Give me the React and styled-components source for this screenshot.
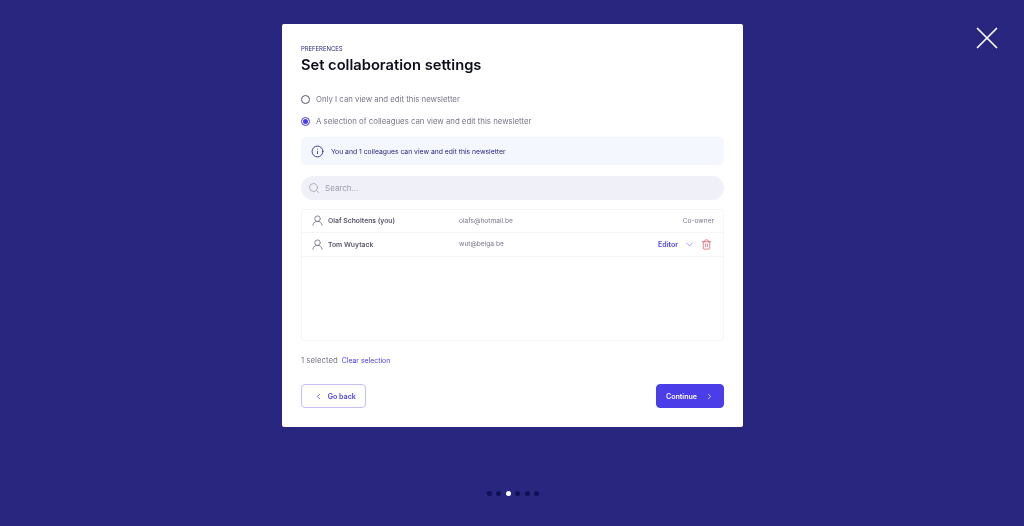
import React from "react";
import styled, { createGlobalStyle } from "styled-components";
import { Search, Info, ChevronDown, ChevronLeft, ChevronRight, Trash2, X } from "lucide-react";

const Global = createGlobalStyle`
  html, body { margin: 0; padding: 0; background: #29267f; }
  body { font-family: Inter, "Open Sans", sans-serif; overflow: hidden; }
  * { box-sizing: border-box; }
`;

const Page = styled.div`
  position: relative;
  width: 1024px;
  height: 526px;
  padding-top: 24px;
  display: flex;
  flex-direction: column;
  align-items: center;
`;

const Close = styled.button`
  position: absolute;
  top: 19px;
  right: 18px;
  padding: 0;
  border: 0;
  background: none;
  color: #fff;
  display: flex;
`;

const Modal = styled.div`
  width: 461px;
  height: 403px;
  margin-left: 1px;
  padding: 21px 19px 19px;
  background: #fff;
  border-radius: 2px;
  display: flex;
  flex-direction: column;
  will-change: transform;
`;

const Eyebrow = styled.div`
  font-size: 5.9px;
  line-height: 8px;
  color: #29267f;
  text-transform: uppercase;
`;

const Title = styled.h1`
  margin: 3px 0 0;
  font-size: 14.7px;
  line-height: 18px;
  font-weight: 600;
  color: #0d0d1c;
`;

const RadioRow = styled.label`
  display: flex;
  align-items: center;
  gap: 6px;
  height: 12px;
  margin-top: ${(p) => p.$top}px;
  font-size: 7.8px;
  color: #77778a;
`;

const Radio = styled.span`
  width: 9px;
  height: 9px;
  border-radius: 50%;
  border: 1px solid ${(p) => (p.$on ? "#4b3de8" : "#55556a")};
  display: flex;
  align-items: center;
  justify-content: center;
  &::after {
    content: "";
    width: 5px;
    height: 5px;
    border-radius: 50%;
    background: ${(p) => (p.$on ? "#4b3de8" : "transparent")};
  }
`;

const Notice = styled.div`
  margin-top: 10px;
  height: 28px;
  padding: 0 10px;
  display: flex;
  align-items: center;
  gap: 7px;
  background: #f4f7fe;
  border-radius: 5px;
  font-size: 6.8px;
  color: #29267f;
`;

const SearchBar = styled.div`
  margin-top: 11px;
  height: 24px;
  padding: 0 7px;
  display: flex;
  align-items: center;
  gap: 5px;
  background: #f0f0f9;
  border-radius: 12px;
  font-size: 8px;
  color: #9a9aaa;
`;

const Table = styled.div`
  margin-top: 9px;
  height: 132px;
  border: 1px solid #f5f5f8;
  border-radius: 4px;
`;

const Row = styled.div`
  height: 24px;
  padding: 0 9px 1px 10px;
  display: flex;
  align-items: center;
  border-bottom: 1px solid #f5f5f8;
  &:first-child {
    height: 23px;
  }
`;

const Avatar = styled.svg`
  width: 11px;
  height: 11px;
  margin-right: 5px;
  fill: none;
  stroke: #77778a;
  stroke-width: 1;
`;

const Name = styled.span`
  width: 131px;
  font-size: 6.8px;
  font-weight: 600;
  color: #55556a;
`;

const Email = styled.span`
  flex: 1;
  font-size: 6.6px;
  color: #77778a;
`;

const Role = styled.span`
  font-size: 6.6px;
  color: #77778a;
`;

const RoleControls = styled.div`
  display: flex;
  align-items: center;
  gap: 6px;
  margin-right: 2px;
  color: #7a6ff0;
`;

const RoleSelect = styled.span`
  font-size: 7px;
  font-weight: 600;
  color: #4b3de8;
`;

const Trash = styled.span`
  display: flex;
  color: #d9414f;
`;

const Selection = styled.div`
  margin-top: 14px;
  display: flex;
  align-items: center;
  gap: 4px;
  height: 10px;
  font-size: 7.8px;
  color: #77778a;
`;

const ClearLink = styled.a`
  font-size: 6.9px;
  color: #4b3de8;
`;

const Footer = styled.div`
  margin-top: auto;
  display: flex;
  justify-content: space-between;
`;

const Button = styled.button`
  width: ${(p) => (p.$primary ? 68 : 65)}px;
  height: 24px;
  padding: 0 0 0 ${(p) => (p.$primary ? 0 : 3)}px;
  border-radius: 4px;
  border: 1px solid ${(p) => (p.$primary ? "#4b3de8" : "#c5bff8")};
  background: ${(p) => (p.$primary ? "#4b3de8" : "#fff")};
  color: ${(p) => (p.$primary ? "#fff" : "#4b3de8")};
  font-family: inherit;
  font-size: 7.1px;
  font-weight: 600;
  display: flex;
  align-items: center;
  justify-content: center;
  gap: ${(p) => (p.$primary ? 8 : 4.5)}px;
`;

const Dots = styled.div`
  margin-top: 64px;
  margin-left: 2px;
  display: flex;
  gap: 4.5px;
`;

const Dot = styled.span`
  width: 5px;
  height: 5px;
  border-radius: 50%;
  background: ${(p) => (p.$active ? "#fff" : "#120f56")};
`;

const UserIcon = () => (
  <Avatar viewBox="0 0 12 12">
    <circle cx="6" cy="4" r="3" />
    <path d="M1 11.5c0-2.6 2.2-4.5 5-4.5s5 1.9 5 4.5" />
  </Avatar>
);

export default function App() {
  return (
    <Page>
      <Global />
      <Close aria-label="Close">
        <X size={38} strokeWidth={1.1} />
      </Close>
      <Modal>
        <Eyebrow>Preferences</Eyebrow>
        <Title>Set collaboration settings</Title>

        <RadioRow $top={19}>
          <Radio />
          Only I can view and edit this newsletter
        </RadioRow>
        <RadioRow $top={10}>
          <Radio $on />
          A selection of colleagues can view and edit this newsletter
        </RadioRow>

        <Notice>
          <Info size={13} strokeWidth={1.6} />
          You and 1 colleagues can view and edit this newsletter
        </Notice>

        <SearchBar>
          <Search size={12} strokeWidth={1.4} />
          Search...
        </SearchBar>

        <Table>
          <Row>
            <UserIcon />
            <Name>Olaf Scholtens (you)</Name>
            <Email>olafs@hotmail.be</Email>
            <Role>Co-owner</Role>
          </Row>
          <Row>
            <UserIcon />
            <Name>Tom Wuytack</Name>
            <Email>wut@belga.be</Email>
            <RoleControls>
              <RoleSelect>Editor</RoleSelect>
              <ChevronDown size={11} strokeWidth={1.5} />
              <Trash><Trash2 size={11} strokeWidth={1.4} /></Trash>
            </RoleControls>
          </Row>
        </Table>

        <Selection>
          1 selected
          <ClearLink>Clear selection</ClearLink>
        </Selection>

        <Footer>
          <Button>
            <ChevronLeft size={9} strokeWidth={2} />
            Go back
          </Button>
          <Button $primary>
            Continue
            <ChevronRight size={9} strokeWidth={2} />
          </Button>
        </Footer>
      </Modal>
      <Dots>
        {[0, 1, 2, 3, 4, 5].map((i) => (
          <Dot key={i} $active={i === 2} />
        ))}
      </Dots>
    </Page>
  );
}
